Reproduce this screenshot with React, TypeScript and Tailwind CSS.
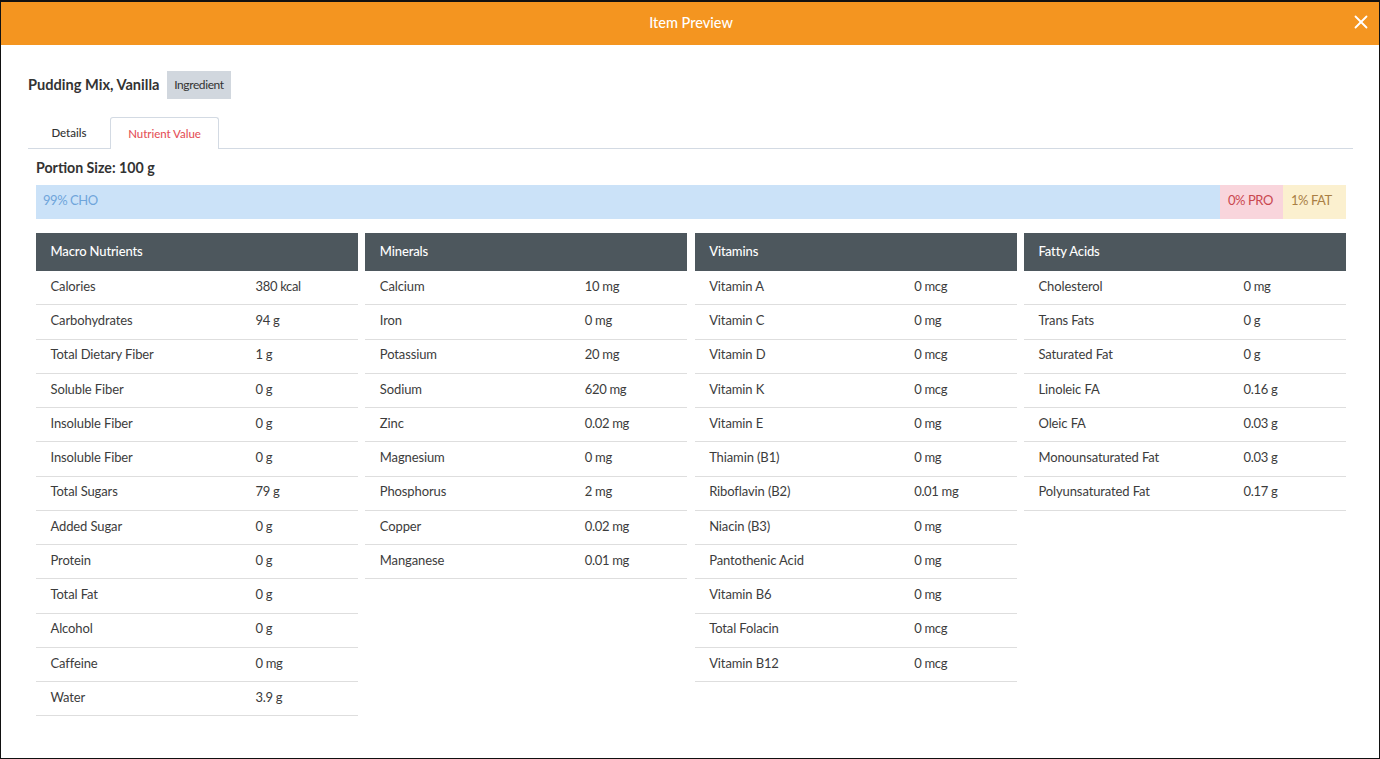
import { X } from "lucide-react";

type Row = [string, string];

const sections: { title: string; rows: Row[] }[] = [
  {
    title: "Macro Nutrients",
    rows: [
      ["Calories", "380 kcal"],
      ["Carbohydrates", "94 g"],
      ["Total Dietary Fiber", "1 g"],
      ["Soluble Fiber", "0 g"],
      ["Insoluble Fiber", "0 g"],
      ["Insoluble Fiber", "0 g"],
      ["Total Sugars", "79 g"],
      ["Added Sugar", "0 g"],
      ["Protein", "0 g"],
      ["Total Fat", "0 g"],
      ["Alcohol", "0 g"],
      ["Caffeine", "0 mg"],
      ["Water", "3.9 g"],
    ],
  },
  {
    title: "Minerals",
    rows: [
      ["Calcium", "10 mg"],
      ["Iron", "0 mg"],
      ["Potassium", "20 mg"],
      ["Sodium", "620 mg"],
      ["Zinc", "0.02 mg"],
      ["Magnesium", "0 mg"],
      ["Phosphorus", "2 mg"],
      ["Copper", "0.02 mg"],
      ["Manganese", "0.01 mg"],
    ],
  },
  {
    title: "Vitamins",
    rows: [
      ["Vitamin A", "0 mcg"],
      ["Vitamin C", "0 mg"],
      ["Vitamin D", "0 mcg"],
      ["Vitamin K", "0 mcg"],
      ["Vitamin E", "0 mg"],
      ["Thiamin (B1)", "0 mg"],
      ["Riboflavin (B2)", "0.01 mg"],
      ["Niacin (B3)", "0 mg"],
      ["Pantothenic Acid", "0 mg"],
      ["Vitamin B6", "0 mg"],
      ["Total Folacin", "0 mcg"],
      ["Vitamin B12", "0 mcg"],
    ],
  },
  {
    title: "Fatty Acids",
    rows: [
      ["Cholesterol", "0 mg"],
      ["Trans Fats", "0 g"],
      ["Saturated Fat", "0 g"],
      ["Linoleic FA", "0.16 g"],
      ["Oleic FA", "0.03 g"],
      ["Monounsaturated Fat", "0.03 g"],
      ["Polyunsaturated Fat", "0.17 g"],
    ],
  },
];

function NutrientTable({ title, rows }: { title: string; rows: Row[] }) {
  return (
    <div>
      <div className="flex h-[38px] items-center bg-[#4d575d] pl-[14.5px] text-[13px] font-medium tracking-[-0.13px] text-white">
        {title}
      </div>
      {rows.map(([name, value], i) => (
        <div
          key={i}
          className="flex h-[34.25px] items-center border-b border-[#dedede] pb-[2px] pl-[14.5px] text-[13px] text-[#3c3c3c]"
        >
          <div className="w-[205px] tracking-[-0.12px]">{name}</div>
          <div className="tracking-[-0.32px]">{value}</div>
        </div>
      ))}
    </div>
  );
}

export default function App() {
  return (
    <div className="flex h-[759px] w-[1380px] flex-col overflow-hidden border border-t-2 border-[#111] bg-white font-['Lato',sans-serif] text-[#333]">
      {/* Header */}
      <div className="relative flex h-[43px] shrink-0 items-center justify-center bg-[#f49520] pb-[1px] pl-[2px] text-[14.5px] font-medium text-white">
        Item Preview
        <X className="absolute right-[7px] top-[9px] h-[22px] w-[22px]" strokeWidth={2} />
      </div>

      <div className="pl-[27px] pr-[26px] pt-[26px]">
        {/* Title */}
        <div className="flex items-center">
          <span className="text-[14.6px] font-bold">Pudding Mix, Vanilla</span>
          <span className="ml-[8px] flex h-[28px] w-[64px] items-center justify-center bg-[#d1d7de] pr-[1px] text-[12px] tracking-[-0.4px]">
            Ingredient
          </span>
        </div>

        {/* Tabs */}
        <div className="mt-[18px] flex h-[32px] border-b border-[#d3dae3] text-[11.5px]">
          <div className="flex w-[82px] items-center justify-center font-medium">Details</div>
          <div className="flex h-[32px] w-[109px] items-center justify-center rounded-t-[3px] border border-b-0 border-[#d3dae3] bg-white font-medium tracking-[-0.05px] text-[#e5535a]">
            Nutrient Value
          </div>
        </div>

        <div className="pl-[8px] pr-[7px]">
          <div className="mt-[10px] text-[14.2px] leading-[17px] font-bold">Portion Size: 100 g</div>

          {/* Macro split bar */}
          <div className="mt-[9px] flex h-[34px] text-[13px] tracking-[-0.45px]">
            <div className="flex-1 bg-[#cbe2f8] pl-[7px] pt-[7px] leading-[16px] text-[#6fa5db]">99% CHO</div>
            <div className="w-[63px] bg-[#f9d5dc] pl-[8px] pt-[7px] leading-[16px] text-[#c9474f]">0% PRO</div>
            <div className="w-[63px] bg-[#fbf0cf] pl-[8px] pt-[7px] leading-[16px] text-[#a97f45]">1% FAT</div>
          </div>

          {/* Tables */}
          <div className="mt-[14px] grid grid-cols-4 gap-x-[7.33px]">
            {sections.map((s) => (
              <NutrientTable key={s.title} title={s.title} rows={s.rows} />
            ))}
          </div>
        </div>
      </div>
    </div>
  );
}
